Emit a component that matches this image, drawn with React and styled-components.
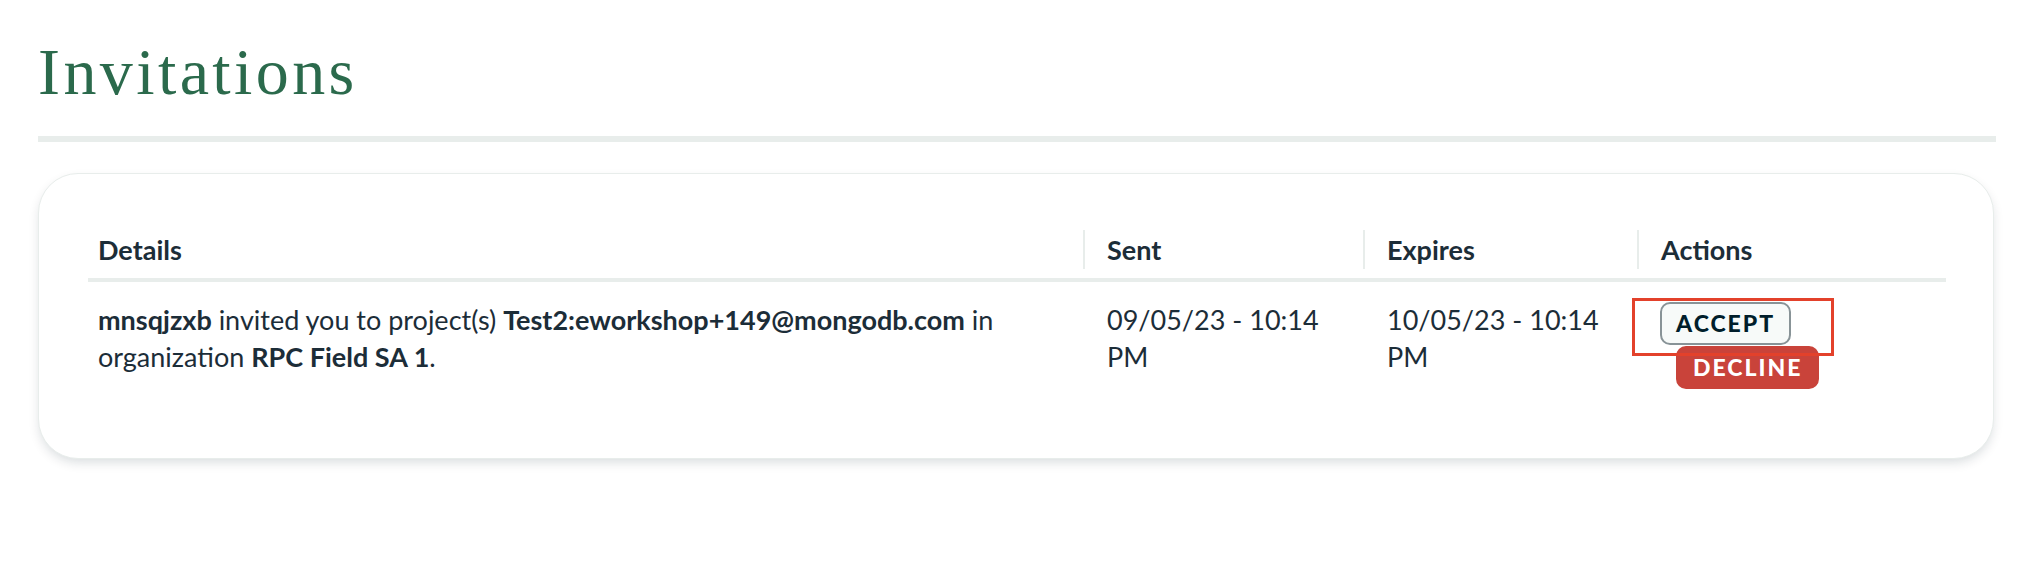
import styled, { createGlobalStyle } from 'styled-components';

const GlobalStyle = createGlobalStyle`
  body {
    margin: 0;
    background: #fff;
    font-family: Lato, 'Liberation Sans', sans-serif;
    color: #1c2d38;
  }
`;

const invitations = [
  {
    inviter: 'mnsqjzxb',
    project: 'Test2:eworkshop+149@mongodb.com',
    org: 'RPC Field SA 1',
    sent: '09/05/23 - 10:14 PM',
    expires: '10/05/23 - 10:14 PM',
  },
];

function App() {
  return (
    <Page>
      <GlobalStyle />
      <Title>Invitations</Title>
      <Rule />
      <Card>
        <Table>
          <HeadCell $first>
            <span>Details</span>
          </HeadCell>
          <HeadCell>
            <span>Sent</span>
          </HeadCell>
          <HeadCell>
            <span>Expires</span>
          </HeadCell>
          <HeadCell>
            <span>Actions</span>
          </HeadCell>
          {invitations.map((inv) => (
            <Row key={inv.project}>
              <Cell $first>
                <b>{inv.inviter}</b> invited you to project(s) <b>{inv.project}</b> in
                organization <b>{inv.org}</b>.
              </Cell>
              <Cell>{inv.sent}</Cell>
              <Cell>{inv.expires}</Cell>
              <Actions>
                <AcceptWrap>
                  <Button>ACCEPT</Button>
                  <Highlight />
                </AcceptWrap>
                <Button $danger>DECLINE</Button>
              </Actions>
            </Row>
          ))}
        </Table>
      </Card>
    </Page>
  );
}

const Page = styled.main`
  padding: 39px 32px 40px 38px;
`;

const Title = styled.h1`
  margin: 0;
  font-family: 'Liberation Serif', serif;
  font-weight: 400;
  font-size: 66px;
  line-height: 66px;
  letter-spacing: 3.4px;
  color: #2b6a4c;
`;

const Rule = styled.div`
  margin-top: 31px;
  height: 6px;
  background: #e8edeb;
`;

const Card = styled.section`
  margin: 31px 2px 0 0;
  padding: 56px 47px 69px 49px;
  background: #fff;
  border: 1px solid #e8edeb;
  border-radius: 40px;
  box-shadow: 0 5px 12px -2px rgba(0, 30, 43, 0.16);
`;

const Table = styled.div`
  display: grid;
  grid-template-columns: 995px 280px 274px 1fr;
`;

const HeadCell = styled.div`
  padding-bottom: 9px;
  border-bottom: 4px solid #e8edeb;
  font-size: 27px;
  font-weight: 700;
  line-height: 39px;

  span {
    display: block;
    height: 39px;
    padding-left: ${(p) => (p.$first ? '10px' : '22px')};
    border-left: ${(p) => (p.$first ? 'none' : '2px solid #e8edeb')};
  }
`;

const Row = styled.div`
  display: contents;
`;

const Cell = styled.div`
  padding: 19px 30px 0 ${(p) => (p.$first ? '10px' : '24px')};
  font-size: 27px;
  line-height: 37px;

  b {
    font-weight: 700;
  }
`;

const Actions = styled.div`
  padding: 20px 0 0 23px;
  display: flex;
  flex-direction: column;
  align-items: flex-start;
  gap: 1px;

  & > button {
    margin-left: 16px;
  }
`;

const AcceptWrap = styled.div`
  position: relative;
`;

const Highlight = styled.div`
  position: absolute;
  left: -28px;
  top: -4px;
  width: 202px;
  height: 58px;
  box-sizing: border-box;
  border: 3px solid #e3412b;
  pointer-events: none;
`;

const Button = styled.button`
  height: 43px;
  padding: 0 ${(p) => (p.$danger ? '15px' : '14px')};
  border: 2px solid ${(p) => (p.$danger ? '#c9433a' : '#889397')};
  border-radius: 10px;
  background: ${(p) => (p.$danger ? '#c9433a' : '#f7faf9')};
  color: ${(p) => (p.$danger ? '#fff' : '#001e2b')};
  font-family: Lato, 'Liberation Sans', sans-serif;
  font-size: 23px;
  font-weight: 900;
  letter-spacing: 2px;
  line-height: 39px;
  cursor: pointer;
`;

export default App;
